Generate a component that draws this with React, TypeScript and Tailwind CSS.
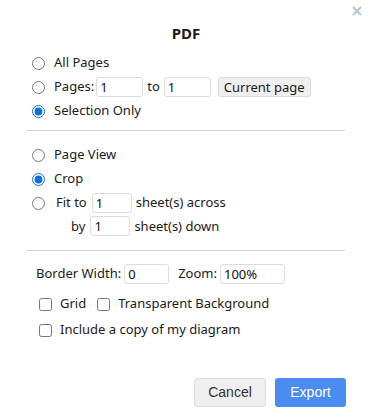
import type { ReactNode } from "react";

function Radio({ name, checked, children }: { name: string; checked?: boolean; children: ReactNode }) {
  return (
    <label className="flex h-6 items-center">
      <input
        type="radio"
        name={name}
        defaultChecked={checked}
        className="m-0 h-[13px] w-[13px] accent-[#0f6fd8]"
      />
      <span className="ml-[9px] flex items-center">{children}</span>
    </label>
  );
}

function Field({ value, w }: { value: string; w: string }) {
  return (
    <input
      defaultValue={value}
      className={`${w} h-[20px] rounded-[3px] border border-[#dcdcdc] px-[3px] text-[13px] leading-none text-[#111] outline-none`}
    />
  );
}

function Check({ children }: { children: ReactNode }) {
  return (
    <label className="flex items-center">
      <input type="checkbox" className="m-0 h-[13px] w-[13px]" />
      <span className="ml-[8px]">{children}</span>
    </label>
  );
}

export default function App() {
  return (
    <div className="relative h-[420px] w-[372px] bg-white font-['Segoe_UI','Noto_Sans',sans-serif] text-[13px] text-[#1a1a1a]">
      <svg className="absolute right-[10px] top-[6px]" width="10" height="10" viewBox="0 0 10 10">
        <path d="M1 1L9 9M9 1L1 9" stroke="#b4c6d8" strokeWidth="2" />
      </svg>

      <div className="pt-[24px] text-center text-[15px] font-bold leading-[18px]">PDF</div>

      <div className="mx-[27px] mt-[9px]">
        <div className="pl-[5px] pb-[7px]">
          <Radio name="pages">All Pages</Radio>
          <Radio name="pages">
            Pages:
            <span className="ml-[2px]"><Field value="1" w="w-[47px]" /></span>
            <span className="mx-[4px]">to</span>
            <Field value="1" w="w-[47px]" />
            <button className="ml-[7px] h-[20px] rounded-[3px] border border-[#dadada] bg-[#efefef] px-[5px] leading-none">
              Current page
            </button>
          </Radio>
          <Radio name="pages" checked>Selection Only</Radio>
        </div>

        <hr className="border-[#d4d4d4]" />

        <div className="pl-[5px] pt-[12px] pb-[12px]">
          <Radio name="view">Page View</Radio>
          <Radio name="view" checked>Crop</Radio>
          <Radio name="view">
            <span className="ml-[2px]">Fit to</span>
            <span className="ml-[5px]"><Field value="1" w="w-[40px]" /></span>
            <span className="ml-[4px]">sheet(s) across</span>
          </Radio>
          <div className="flex h-[23px] items-center">
            <span className="ml-[39px]">by</span>
            <span className="ml-[5px]"><Field value="1" w="w-[40px]" /></span>
            <span className="ml-[4px]">sheet(s) down</span>
          </div>
        </div>

        <hr className="border-[#d4d4d4]" />

        <div className="flex h-[24px] items-center pl-[9px] mt-[11px]">
          <span>Border Width:</span>
          <span className="ml-[3px]"><Field value="0" w="w-[45px]" /></span>
          <span className="ml-[9px]">Zoom:</span>
          <span className="ml-[3px]"><Field value="100%" w="w-[65px]" /></span>
        </div>

        <div className="mt-[6px] flex h-[24px] items-center gap-[8px] pl-[12px]">
          <Check>Grid</Check>
          <span className="ml-[3px]"><Check>Transparent Background</Check></span>
        </div>
        <div className="mt-[2px] flex h-[24px] items-center pl-[12px]">
          <Check>Include a copy of my diagram</Check>
        </div>

        <div className="-mr-[1px] mt-[36px] flex justify-end gap-[9px] font-['Liberation_Sans',Arial,sans-serif] text-[14px]">
          <button className="h-[29px] w-[72px] rounded-[3px] border border-[#dcdcdc] bg-[#efefef] text-[#333]">
            Cancel
          </button>
          <button className="h-[29px] w-[71px] rounded-[3px] bg-[#4a8cf0] text-white">Export</button>
        </div>
      </div>
    </div>
  );
}
